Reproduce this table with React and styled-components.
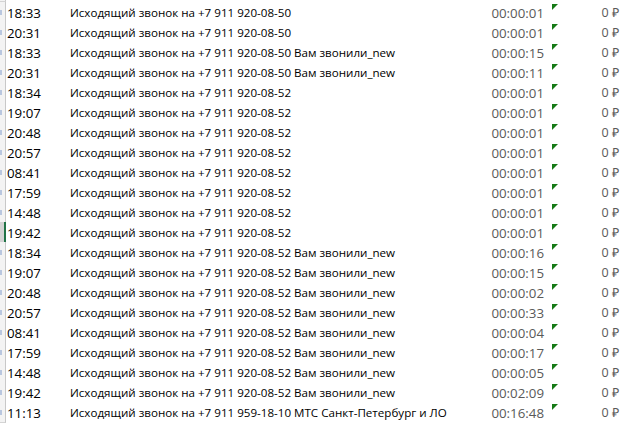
import React from 'react';
import styled, { createGlobalStyle } from 'styled-components';

const GlobalStyle = createGlobalStyle`
  html, body {
    margin: 0;
    padding: 0;
    background: #fff;
  }
  body {
    font-family: 'Open Sans', 'Liberation Sans', sans-serif;
  }
`;

const PREFIX = 'Исходящий звонок на +7 911 ';

const calls = [
  ['18:33', '920-08-50', '00:00:01'],
  ['20:31', '920-08-50', '00:00:01'],
  ['18:33', '920-08-50 Вам звонили_new', '00:00:15'],
  ['20:31', '920-08-50 Вам звонили_new', '00:00:11'],
  ['18:34', '920-08-52', '00:00:01'],
  ['19:07', '920-08-52', '00:00:01'],
  ['20:48', '920-08-52', '00:00:01'],
  ['20:57', '920-08-52', '00:00:01'],
  ['08:41', '920-08-52', '00:00:01'],
  ['17:59', '920-08-52', '00:00:01'],
  ['14:48', '920-08-52', '00:00:01'],
  ['19:42', '920-08-52', '00:00:01'],
  ['18:34', '920-08-52 Вам звонили_new', '00:00:16'],
  ['19:07', '920-08-52 Вам звонили_new', '00:00:15'],
  ['20:48', '920-08-52 Вам звонили_new', '00:00:02'],
  ['20:57', '920-08-52 Вам звонили_new', '00:00:33'],
  ['08:41', '920-08-52 Вам звонили_new', '00:00:04'],
  ['17:59', '920-08-52 Вам звонили_new', '00:00:17'],
  ['14:48', '920-08-52 Вам звонили_new', '00:00:05'],
  ['19:42', '920-08-52 Вам звонили_new', '00:02:09'],
  ['11:13', '959-18-10 МТС Санкт-Петербург и ЛО', '00:16:48'],
];

const App = () => {
  return (
    <>
      <GlobalStyle />
      <Sheet>
        <TopEdge />
        {calls.map(([time, tail, dur], i) => (
          <Row key={i}>
            <RowHead $selected={i === 11} />
            <TimeCell>{time}</TimeCell>
            <TextCell>{PREFIX + tail}</TextCell>
            <NumCell>{dur}</NumCell>
            <NumCell $flag>0 ₽</NumCell>
          </Row>
        ))}
      </Sheet>
    </>
  );
};

export default App;

const Sheet = styled.div`
  width: 628px;
  height: 424px;
  overflow: hidden;
  color: #000;
`;

const TopEdge = styled.div`
  height: 1px;
  width: 5px;
  background: #f3f3f3;
  border-right: 1px solid #c8c8c8;
  border-bottom: 1px solid #d4d4d4;
`;

const Row = styled.div`
  display: grid;
  grid-template-columns: 6px 63px minmax(0, 1fr) 81px 77px;
  height: 20px;
  line-height: 20px;
  white-space: nowrap;
`;

const RowHead = styled.div`
  position: relative;
  box-sizing: border-box;
  background: ${(p) => (p.$selected ? '#d3d3d3' : '#f3f3f3')};
  border-right: ${(p) => (p.$selected ? '2px solid #217346' : '1px solid #c8c8c8')};
  border-bottom: 1px solid #d4d4d4;

  &::after {
    content: '';
    position: absolute;
    left: 0;
    top: 8px;
    width: 2px;
    height: 5px;
    background: #9fb4d6;
    opacity: ${(p) => (p.$selected ? 0 : 0.7)};
  }
`;

const TimeCell = styled.div`
  padding: 1px 0 0 1px;
  font-size: 13.3px;
`;

const TextCell = styled.div`
  padding: 1px 0 0 1px;
  font-size: 11.6px;
  min-width: 0;
`;

const NumCell = styled.div`
  position: relative;
  text-align: right;
  padding: 1px ${(p) => (p.$flag ? '9px' : '7px')} 0 0;
  font-size: ${(p) => (p.$flag ? '12.5px' : '13.3px')};
  color: #595959;

  ${(p) =>
    p.$flag &&
    `
    &::before {
      content: '';
      position: absolute;
      left: 1px;
      top: 2px;
      width: 0;
      height: 0;
      border-top: 6px solid #167a16;
      border-right: 6px solid transparent;
    }
  `}
`;
